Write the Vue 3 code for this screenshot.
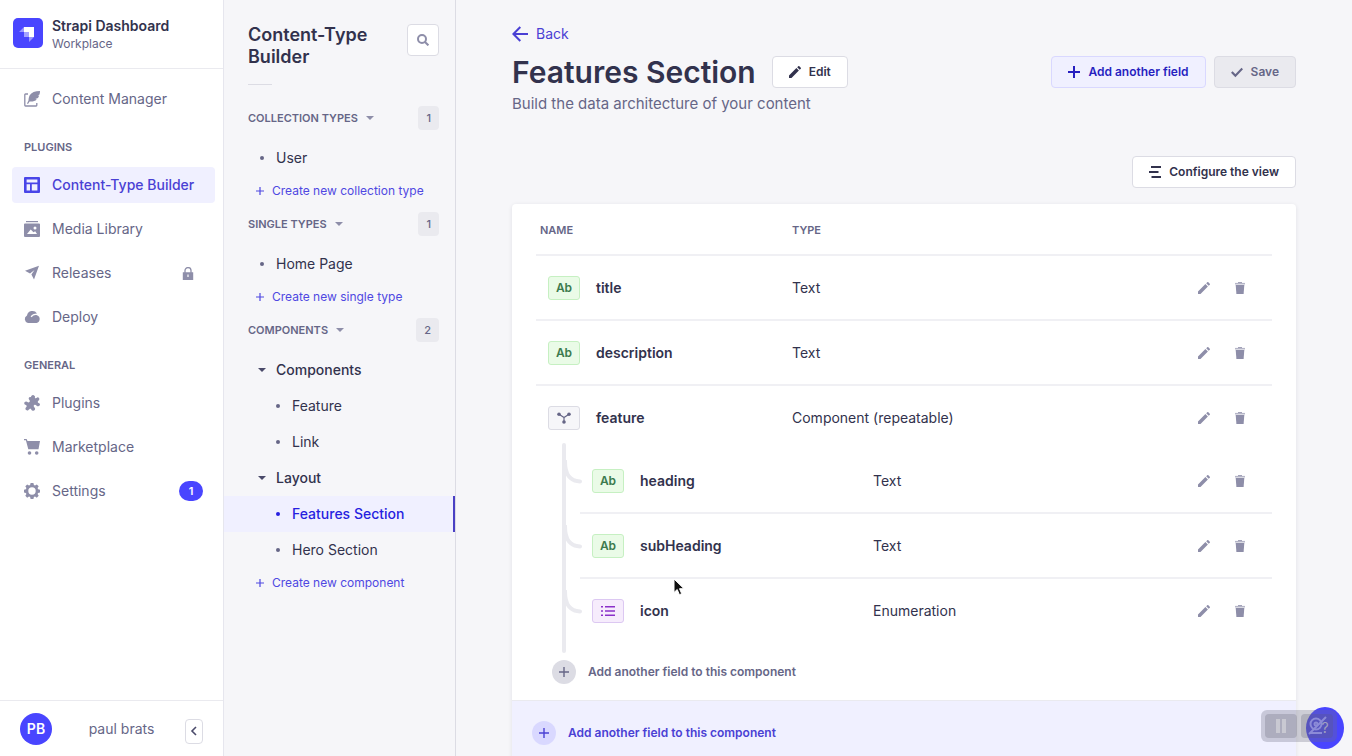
<script setup>
const nav = [
  { items: [{ label: 'Content Manager', icon: 'feather' }] },
  {
    title: 'PLUGINS',
    items: [
      { label: 'Content-Type Builder', icon: 'layout', active: true },
      { label: 'Media Library', icon: 'media' },
      { label: 'Releases', icon: 'plane', lock: true },
      { label: 'Deploy', icon: 'cloud' },
    ],
  },
  {
    title: 'GENERAL',
    items: [
      { label: 'Plugins', icon: 'puzzle' },
      { label: 'Marketplace', icon: 'cart' },
      { label: 'Settings', icon: 'cog', count: 1 },
    ],
  },
]

const sections = [
  { title: 'COLLECTION TYPES', count: 1, create: 'Create new collection type', items: [{ label: 'User' }] },
  { title: 'SINGLE TYPES', count: 1, create: 'Create new single type', items: [{ label: 'Home Page' }] },
  {
    title: 'COMPONENTS',
    count: 2,
    create: 'Create new component',
    items: [
      { label: 'Components', group: true },
      { label: 'Feature', nested: true },
      { label: 'Link', nested: true },
      { label: 'Layout', group: true },
      { label: 'Features Section', nested: true, active: true },
      { label: 'Hero Section', nested: true },
    ],
  },
]

const fields = [
  { name: 'title', type: 'Text', kind: 'text' },
  { name: 'description', type: 'Text', kind: 'text' },
  { name: 'feature', type: 'Component (repeatable)', kind: 'component' },
]

const subFields = [
  { name: 'heading', type: 'Text', kind: 'text' },
  { name: 'subHeading', type: 'Text', kind: 'text' },
  { name: 'icon', type: 'Enumeration', kind: 'enum' },
]
</script>

<template>
  <div class="app">
    <aside class="sidebar">
      <header class="brand">
        <svg class="logo" viewBox="0 0 30 30" aria-hidden="true">
          <rect width="30" height="30" rx="5" fill="#4945ff" />
          <path d="M11 9h10v10h-5v-5h-5z" fill="#fff" />
          <path d="M11 9v5H6zM16 19h5l-5 5z" fill="#fff" opacity=".45" />
          <path d="M11 14h5v5h-5z" fill="#fff" opacity=".5" />
        </svg>
        <div>
          <div class="brand-name">Strapi Dashboard</div>
          <div class="brand-sub">Workplace</div>
        </div>
      </header>

      <nav class="nav" aria-label="Main">
        <div v-for="(group, g) in nav" :key="g" class="nav-group">
          <h2 v-if="group.title" class="nav-title">{{ group.title }}</h2>
          <a v-for="item in group.items" :key="item.label" href="#" class="nav-item" :class="{ active: item.active }">
            <svg class="nav-icon" viewBox="0 0 16 16" fill="currentColor" aria-hidden="true">
              <template v-if="item.icon === 'feather'">
                <path d="M4 3H1.500a.7.700 0 0 0-.7.700v10.600c0 .4.300.700.700.700h10.600c.4 0 .7-.3.700-.7V12" fill="none" stroke="currentColor" stroke-width="1.300" />
                <path d="M16 0c-5 .1-8.600 1.500-10.300 4.200C4.700 6 4.600 8 4.500 9.600L3 12.500l1 .5 1.600-2.600c2.600.3 5.300-.2 7.200-2l-1.500-.4 2.700-.9c.6-.9.900-1.700 1.100-2.500l-1.500-.2 1.900-.9C15.900 2.300 16 1.200 16 0z" />
              </template>
              <path v-else-if="item.icon === 'layout'" fill-rule="evenodd" d="M1 0h14a1 1 0 0 1 1 1v14a1 1 0 0 1-1 1H1a1 1 0 0 1-1-1V1a1 1 0 0 1 1-1zm1.600 2.600v2.800h10.800V2.600zm0 4.600v6.200H6V7.200zm5.200 0v6.200h5.600V7.200z" />
              <template v-else-if="item.icon === 'media'">
                <path d="M2 0h12v1.200H2z" />
                <path fill-rule="evenodd" d="M1 2.500h14a1 1 0 0 1 1 1V15a1 1 0 0 1-1 1H1a1 1 0 0 1-1-1V3.500a1 1 0 0 1 1-1zM3 13h10l-1.800-2.800-1.700 1L6.700 8.500zM11 5.500a1.500 1.500 0 1 0 0 3 1.500 1.500 0 0 0 0-3z" />
              </template>
              <path v-else-if="item.icon === 'plane'" d="M15 .8 1 5.800l5 2.600 4.500-3.400L7.400 9.600 10 14.500z" />
              <path v-else-if="item.icon === 'cloud'" fill-rule="evenodd" d="M4 14a4 4 0 0 1-1-7.500A5.500 5.500 0 0 1 13 4.400c-3 0-5.200 1.200-6.400 3.200l1.200.7C9 6.500 11 5.700 13 6.300A4 4 0 0 1 12.500 14z" />
              <path v-else-if="item.icon === 'puzzle'" d="M7 2.300A2 2 0 0 1 10.400.7c.8.700.7 1.500.4 2.300.8.400 1.600.2 2.400-.6a1.700 1.700 0 0 1 1.700 2.800c-.9.600-1.400 1.300-1 2.200.8.700 2 .5 2.100 2a2 2 0 0 1-3.100 1.500c-.9-.7-1.700-1.500-2.700-.8-1 .8-.4 1.600.3 2.300a2 2 0 0 1-1.600 3.400c-1.500-.1-1.500-1.200-2-2-1-.4-1.600.3-2.400 1.200a1.800 1.800 0 0 1-2.800-2.200c.7-.8 1.500-1.500.6-2.500C1 9.800.2 9.400.2 8.100A1.900 1.900 0 0 1 3 6.800c1 .6 1.700.9 2.400.2.800-.8.500-1.400-.2-2.300-.9-1-.5-2 .2-2.500.6-.4 1.200-.2 1.600.1z" />
              <template v-else-if="item.icon === 'cart'">
                <path d="M0 0h2.600l.9 2H16l-1.500 8.200H4.300L1.900 1.200H0z" />
                <circle cx="5.500" cy="14" r="1.800" /><circle cx="12.700" cy="14" r="1.800" />
              </template>
              <path v-else fill-rule="evenodd" d="m6.600 0h2.800l.5 2 1.100.5 1.800-1.100 1.900 1.900-1.100 1.800.5 1.100 1.900.5v2.700l-1.900.5-.5 1.100 1.100 1.800-1.900 1.900-1.800-1.100-1.100.5-.5 1.900H6.600l-.5-1.900-1.100-.5-1.800 1.100-1.900-1.900 1.100-1.800-.5-1.100-1.900-.5V6.700l1.900-.5.500-1.100-1.100-1.800 1.900-1.900L5 2.500l1.100-.5zM8 4.300a3.700 3.700 0 1 0 0 7.400 3.700 3.700 0 0 0 0-7.400z" />
            </svg>
            <span class="nav-label">{{ item.label }}</span>
            <svg v-if="item.lock" class="lock" viewBox="0 0 12 13" aria-hidden="true">
              <path d="M3 6V3.600a3 3 0 0 1 6 0V6" fill="none" stroke="#8e8ea9" stroke-width="1.300" />
              <path fill="#8e8ea9" fill-rule="evenodd" d="M.8 5.200h10.400v7.800H.8zM5.400 7.600v2.300h1.200V7.600z" />
            </svg>
            <span v-if="item.count" class="count">{{ item.count }}</span>
          </a>
        </div>
      </nav>

      <footer class="user">
        <span class="avatar">PB</span>
        <span class="user-name">paul brats</span>
        <button class="collapse" type="button" aria-label="Collapse navigation">
          <svg viewBox="0 0 8 10" width="8" height="10" fill="none" stroke="#4a4a6a" stroke-width="1.600" aria-hidden="true"><path d="M6 1 2 5l4 4" /></svg>
        </button>
      </footer>
    </aside>

    <aside class="subnav">
      <header class="subnav-head">
        <h1>Content-Type Builder</h1>
        <button class="search" type="button" aria-label="Search">
          <svg viewBox="0 0 12 12" width="12" height="12" fill="none" stroke="#8e8ea9" stroke-width="2" aria-hidden="true"><circle cx="5" cy="5" r="4" /><path d="m8 8 3.400 3.400" /></svg>
        </button>
      </header>
      <hr class="subnav-rule" />
      <section v-for="section in sections" :key="section.title" class="section">
        <div class="section-head">
          <button type="button" class="section-toggle">
            {{ section.title }}
            <svg viewBox="0 0 8 4" width="8" height="4" aria-hidden="true"><path d="M0 0h8L4 4z" fill="#8e8ea9" /></svg>
          </button>
          <span class="section-count">{{ section.count }}</span>
        </div>
        <a v-for="item in section.items" :key="item.label" href="#" class="link" :class="{ nested: item.nested, group: item.group, active: item.active }">
          <svg v-if="item.group" class="mark" viewBox="0 0 8 4" aria-hidden="true"><path d="M0 0h8L4 4z" fill="#4a4a6a" /></svg>
          <span v-else class="dot"></span>
          {{ item.label }}
        </a>
        <button type="button" class="create">
          <svg viewBox="0 0 8 8" width="8" height="8" stroke="currentColor" stroke-width="1.200" aria-hidden="true"><path d="M4 0v8M0 4h8" /></svg>
          {{ section.create }}
        </button>
      </section>
    </aside>

    <main class="main">
      <a href="#" class="back">
        <svg viewBox="0 0 16 16" width="16" height="16" fill="none" stroke="currentColor" stroke-width="2" aria-hidden="true"><path d="M16 8H1.500M8.300 1 1.400 8l6.900 7" /></svg>
        Back
      </a>
      <div class="title-row">
        <h2>Features Section</h2>
        <button type="button" class="btn">
          <svg viewBox="0 0 12 12" width="12" height="12" fill="currentColor" aria-hidden="true"><path d="M0 9.500 7.400 2.100l2.500 2.500L2.500 12H0zM8.200 1.300 9.300.2c.3-.3.700-.3 1 0l1.500 1.500c.3.300.3.700 0 1l-1.100 1.100z" /></svg>
          Edit
        </button>
        <div class="actions">
          <button type="button" class="btn secondary">
            <svg viewBox="0 0 12 12" width="12" height="12" stroke="currentColor" stroke-width="2" aria-hidden="true"><path d="M6 0v12M0 6h12" /></svg>
            Add another field
          </button>
          <button type="button" class="btn disabled" disabled>
            <svg viewBox="0 0 12 12" width="12" height="12" fill="none" stroke="currentColor" stroke-width="2.200" aria-hidden="true"><path d="m.8 6 3.600 3.700 6.900-7.200" /></svg>
            Save
          </button>
        </div>
      </div>
      <p class="subtitle">Build the data architecture of your content</p>

      <div class="toolbar">
        <button type="button" class="btn">
          <svg viewBox="0 0 12 12" width="12" height="12" stroke="currentColor" stroke-width="2" aria-hidden="true"><path d="M2 1h10M0 6h9.500M2.500 11H12" /></svg>
          Configure the view
        </button>
      </div>

      <div class="card">
        <div class="card-body">
          <table class="fields">
            <colgroup><col class="col-name" /><col /><col class="col-actions" /></colgroup>
            <thead>
              <tr><th scope="col">NAME</th><th scope="col">TYPE</th><th></th></tr>
            </thead>
            <tbody>
              <tr v-for="field in fields" :key="field.name">
                <td>
                  <div class="name">
                    <span class="badge" :class="field.kind">
                      <template v-if="field.kind === 'text'">Ab</template>
                      <svg v-else viewBox="0 0 14 12" width="14" height="12" aria-hidden="true">
                        <path d="M2 2.200 7 5.500l5-3.300M7 5.500V10" fill="none" stroke="#666687" stroke-width="1.200" />
                        <g fill="#666687"><circle cx="2" cy="2.200" r="1.800" /><circle cx="12" cy="2.200" r="1.800" /><circle cx="7" cy="10" r="1.800" /></g>
                      </svg>
                    </span>
                    {{ field.name }}
                  </div>
                </td>
                <td>{{ field.type }}</td>
                <td>
                  <div class="row-actions">
                    <button type="button" :aria-label="'Edit ' + field.name">
                      <svg viewBox="0 0 12 12" width="12" height="12" fill="currentColor" aria-hidden="true"><path d="M0 9.500 7.400 2.100l2.500 2.500L2.500 12H0zM8.200 1.300 9.300.2c.3-.3.700-.3 1 0l1.500 1.500c.3.300.3.700 0 1l-1.100 1.100z" /></svg>
                    </button>
                    <button type="button" :aria-label="'Delete ' + field.name">
                      <svg viewBox="0 0 12 12" width="12" height="12" fill="currentColor" aria-hidden="true"><path d="M4 .2h4v.8H4z" /><path d="M1 .9h10v1.600H1z" opacity=".65" /><path d="M1.700 3h8.600l-.7 9H2.400z" /></svg>
                    </button>
                  </div>
                </td>
              </tr>
              <tr class="nest-row">
                <td colspan="3">
                  <div class="nest">
                    <table class="fields sub">
                      <colgroup><col class="col-name" /><col /><col class="col-actions" /></colgroup>
                      <tbody>
                        <tr v-for="field in subFields" :key="field.name">
                          <td>
                            <svg class="branch" viewBox="0 0 18 24" aria-hidden="true"><path d="M1 1c0 14 5 20 15 20.500" fill="none" stroke="#eaeaef" stroke-width="4" stroke-linecap="round" /></svg>
                            <div class="name">
                              <span class="badge" :class="field.kind">
                                <template v-if="field.kind === 'text'">Ab</template>
                                <svg v-else viewBox="0 0 14 12" width="14" height="12" fill="#8b31c9" aria-hidden="true"><path d="M0 1h2v1.600H0zM4 1h10v1.600H4zM0 5.200h2v1.600H0zM4 5.200h10v1.600H4zM0 9.400h2V11H0zM4 9.400h10V11H4z" /></svg>
                              </span>
                              {{ field.name }}
                            </div>
                          </td>
                          <td>{{ field.type }}</td>
                          <td>
                            <div class="row-actions">
                              <button type="button" :aria-label="'Edit ' + field.name">
                                <svg viewBox="0 0 12 12" width="12" height="12" fill="currentColor" aria-hidden="true"><path d="M0 9.500 7.400 2.100l2.500 2.500L2.500 12H0zM8.200 1.300 9.300.2c.3-.3.700-.3 1 0l1.500 1.500c.3.300.3.700 0 1l-1.100 1.100z" /></svg>
                              </button>
                              <button type="button" :aria-label="'Delete ' + field.name">
                                <svg viewBox="0 0 12 12" width="12" height="12" fill="currentColor" aria-hidden="true"><path d="M4 .2h4v.8H4z" /><path d="M1 .9h10v1.600H1z" opacity=".65" /><path d="M1.700 3h8.600l-.7 9H2.400z" /></svg>
                              </button>
                            </div>
                          </td>
                        </tr>
                      </tbody>
                    </table>
                  </div>
                  <button type="button" class="add">
                    <span class="plus"><svg viewBox="0 0 10 10" width="10" height="10" stroke="currentColor" stroke-width="1.400" aria-hidden="true"><path d="M5 0v10M0 5h10" /></svg></span>
                    Add another field to this component
                  </button>
                </td>
              </tr>
            </tbody>
          </table>
        </div>
        <button type="button" class="add add-footer">
          <span class="plus"><svg viewBox="0 0 10 10" width="10" height="10" stroke="currentColor" stroke-width="1.400" aria-hidden="true"><path d="M5 0v10M0 5h10" /></svg></span>
          Add another field to this component
        </button>
      </div>
    </main>

    <button type="button" class="help" aria-label="Help">?</button>
    <div class="recorder">
      <button type="button" aria-label="Pause">
        <svg viewBox="0 0 32 24" width="32" height="24" fill="#c9c9d2" aria-hidden="true"><path d="M11 5h4v14h-4zM17 5h4v14h-4z" /></svg>
      </button>
      <button type="button" aria-label="Camera off">
        <svg viewBox="0 0 32 24" width="32" height="24" fill="none" stroke="#a9a9e6" stroke-width="2" opacity=".65" aria-hidden="true"><circle cx="15" cy="10" r="5.500" /><circle cx="15" cy="10" r="1.500" /><path d="M9 19h12M8 20 25 3" /></svg>
      </button>
    </div>
    <svg class="cursor" viewBox="0 0 12 18" aria-hidden="true"><path d="M1 1v13.500l3.200-3 2.200 5.200 2.300-1-2.200-5H11z" fill="#111" stroke="#fff" stroke-width="1" /></svg>
  </div>
</template>

<style>
html,
body {
  margin: 0;
  background: #f6f6f9;
}
</style>

<style scoped>
.app {
  position: relative;
  display: flex;
  height: 100vh;
  overflow: hidden;
  background: #f6f6f9;
  color: #32324d;
  font: 14px/20px Inter, "Liberation Sans", sans-serif;
}
.app *,
.app *::before {
  box-sizing: border-box;
}
button {
  font: inherit;
  color: inherit;
  border: 0;
  padding: 0;
  background: none;
}
a {
  color: inherit;
  text-decoration: none;
}
h1,
h2,
p {
  margin: 0;
}
svg {
  display: block;
  flex: none;
}

.sidebar {
  display: flex;
  flex-direction: column;
  flex: none;
  width: 224px;
  background: #fff;
  border-right: 1px solid #e6e6ee;
}
.brand {
  display: flex;
  align-items: center;
  gap: 9px;
  height: 69px;
  padding: 2px 13px 0;
  border-bottom: 1px solid #eaeaef;
}
.logo {
  width: 30px;
  height: 30px;
  margin-bottom: 4px;
}
.brand-name {
  font-weight: 600;
  line-height: 18px;
}
.brand-sub {
  font-size: 12px;
  line-height: 18px;
  color: #666687;
}
.nav {
  flex: 1;
  padding: 12px 8px 0 12px;
}
.nav-group {
  display: flex;
  flex-direction: column;
  gap: 8px;
}
.nav-title {
  margin: 20px 0 2px;
  padding-left: 12px;
  font-size: 11px;
  font-weight: 600;
  line-height: 20px;
  color: #666687;
}
.nav-item {
  display: flex;
  align-items: center;
  gap: 12px;
  height: 36px;
  padding: 0 12px;
  border-radius: 4px;
  color: #666687;
}
.nav-icon {
  width: 16px;
  height: 16px;
  color: #8e8ea9;
}
.nav-label {
  flex: 1;
}
.nav-item.active {
  background: #f0f0ff;
  color: #4945ff;
  font-weight: 500;
}
.nav-item.active .nav-label {
  color: #4a40d4;
}
.nav-item.active .nav-icon {
  color: #4945e8;
}
.lock {
  width: 12px;
  height: 13px;
  margin-right: 9px;
}
.count {
  width: 24px;
  border-radius: 10px;
  background: #4945ff;
  color: #fff;
  font-size: 11px;
  font-weight: 600;
  text-align: center;
}
.user {
  display: flex;
  align-items: center;
  justify-content: space-between;
  height: 56px;
  padding: 0 20px;
  border-top: 1px solid #eaeaef;
  color: #666687;
}
.user-name {
  padding-left: 6px;
}
.avatar {
  width: 32px;
  border-radius: 50%;
  background: #4945ff;
  color: #fff;
  font-weight: 600;
  line-height: 32px;
  text-align: center;
}
.collapse {
  display: grid;
  place-items: center;
  width: 18px;
  height: 25px;
  margin-top: 5px;
  border: 1px solid #dcdce4;
  border-radius: 4px;
}

.subnav {
  flex: none;
  width: 232px;
  padding-top: 24px;
  border-right: 1px solid #dcdce4;
}
.subnav-head {
  display: flex;
  justify-content: space-between;
  align-items: flex-start;
  height: 60px;
  padding: 0 16px 0 24px;
}
h1 {
  width: 140px;
  font-size: 18px;
  font-weight: 600;
  line-height: 22px;
}
.search {
  display: grid;
  place-items: center;
  width: 32px;
  height: 32px;
  border: 1px solid #dcdce4;
  border-radius: 4px;
  background: #fff;
}
.subnav-rule {
  width: 24px;
  height: 1px;
  margin: 0 24px 21px;
  border: 0;
  background: #dcdce4;
}
.section {
  margin-bottom: 6px;
}
.section-head {
  display: flex;
  align-items: center;
  justify-content: space-between;
  margin-bottom: 10px;
  padding: 0 16px 0 24px;
  color: #666687;
}
.section-toggle {
  display: flex;
  align-items: center;
  gap: 8px;
  font-size: 11px;
  font-weight: 600;
}
.section-count {
  padding: 0 8px;
  border-radius: 4px;
  background: #eaeaef;
  font-size: 11px;
  font-weight: 500;
  line-height: 24px;
}
.link {
  display: flex;
  align-items: center;
  gap: 10px;
  height: 36px;
  padding-left: 34px;
}
.link.nested {
  padding-left: 50px;
}
.link.group {
  font-weight: 500;
}
.link.active {
  border-right: 2px solid #4a40c4;
  background: #f0f0ff;
  color: #271fe0;
  font-weight: 500;
}
.mark {
  width: 8px;
  height: 4px;
}
.dot {
  width: 4px;
  height: 4px;
  margin: 0 2px;
  border-radius: 50%;
  background: #666687;
}
.link.active .dot {
  background: #271fe0;
}
.create {
  display: flex;
  align-items: center;
  gap: 8px;
  height: 30px;
  padding-left: 32px;
  color: #4f48e2;
  font-size: 12px;
}

.main {
  flex: 1;
  min-width: 0;
  padding: 24px 56px 0;
}
.back {
  display: inline-flex;
  align-items: center;
  gap: 8px;
  color: #4a40d4;
}
.title-row {
  display: flex;
  align-items: center;
  gap: 16px;
  margin-top: 7px;
}
.title-row h2 {
  font-size: 30px;
  font-weight: 600;
  line-height: 36px;
}
.btn {
  display: flex;
  align-items: center;
  gap: 8px;
  height: 32px;
  padding: 0 16px;
  border: 1px solid #dcdce4;
  border-radius: 4px;
  background: #fff;
  font-size: 12px;
  font-weight: 600;
}
.actions {
  display: flex;
  gap: 8px;
  margin-left: auto;
}
.secondary {
  border-color: #d9d8ff;
  background: #f0f0ff;
  color: #271fc0;
}
.disabled {
  background: #eaeaef;
  color: #666687;
}
.subtitle {
  margin-top: 2px;
  font-size: 15px;
  line-height: 24px;
  color: #666687;
}
.toolbar {
  display: flex;
  justify-content: flex-end;
  margin: 40px 0 16px;
}
.card {
  border-radius: 4px;
  background: #fff;
  box-shadow: 0 1px 4px rgba(33, 33, 52, 0.1);
}
.card-body {
  padding: 0 24px;
}
.fields {
  width: 100%;
  border-collapse: separate;
  border-spacing: 0;
  table-layout: fixed;
}
.col-name {
  width: 252px;
}
.sub .col-name {
  width: 289px;
}
.col-actions {
  width: 88px;
}
th {
  height: 50px;
  padding: 2px 4px 0;
  color: #666687;
  font-size: 11px;
  font-weight: 600;
  text-align: left;
}
td {
  position: relative;
  height: 65px;
  padding: 0 4px;
  border-top: 2px solid #f0f0f4;
}
.name {
  display: flex;
  align-items: center;
  gap: 16px;
  padding-left: 8px;
  font-weight: 600;
}
.badge {
  display: grid;
  place-items: center;
  width: 32px;
  height: 24px;
  border: 1px solid #c6f0c2;
  border-radius: 3px;
  background: #eafbe7;
  color: #3c7a4e;
  font-size: 12px;
}
.badge.component {
  border-color: #dcdce4;
  background: #f6f6f9;
}
.badge.enum {
  border-color: #dcc8f2;
  background: #f6ecfc;
}
.row-actions {
  display: flex;
  justify-content: flex-end;
  gap: 16px;
  padding-right: 18px;
  color: #8e8ea9;
}
.row-actions button {
  display: grid;
  place-items: center;
  width: 20px;
  height: 20px;
}
.nest-row > td {
  height: auto;
  padding: 0;
  border: 0;
}
.nest {
  position: relative;
  padding: 0 0 11px 44px;
}
.nest::before {
  content: "";
  position: absolute;
  top: -6px;
  bottom: 0;
  left: 26px;
  width: 4px;
  border-radius: 2px;
  background: #eaeaef;
}
.sub tr:first-child td {
  height: 63px;
  border-top: 0;
}
.branch {
  position: absolute;
  left: -16px;
  bottom: 28px;
  width: 18px;
  height: 24px;
}
.add {
  display: flex;
  align-items: center;
  gap: 12px;
  width: 100%;
  padding: 7px 16px 16px;
  color: #666687;
  font-size: 12px;
  font-weight: 600;
}
.plus {
  display: grid;
  place-items: center;
  width: 24px;
  height: 24px;
  border-radius: 50%;
  background: #dcdce4;
}
.add-footer {
  padding: 20px;
  border-top: 1px solid #eaeaef;
  background: #f0f0ff;
  color: #4a40d4;
}
.add-footer .plus {
  background: #d9d8ff;
}

.help {
  position: absolute;
  right: 8px;
  bottom: 7px;
  width: 38px;
  height: 42px;
  border-radius: 50%;
  background: #4945ff;
  color: #d9d8ff;
}
.recorder {
  position: absolute;
  right: 15px;
  bottom: 14px;
  display: flex;
  gap: 4px;
  padding: 4px;
  border-radius: 6px;
  background: rgba(110, 110, 130, 0.3);
}
.recorder button {
  border-radius: 4px;
  background: rgba(90, 90, 110, 0.25);
}
.cursor {
  position: absolute;
  left: 673px;
  top: 578px;
  width: 12px;
  height: 18px;
}
</style>
